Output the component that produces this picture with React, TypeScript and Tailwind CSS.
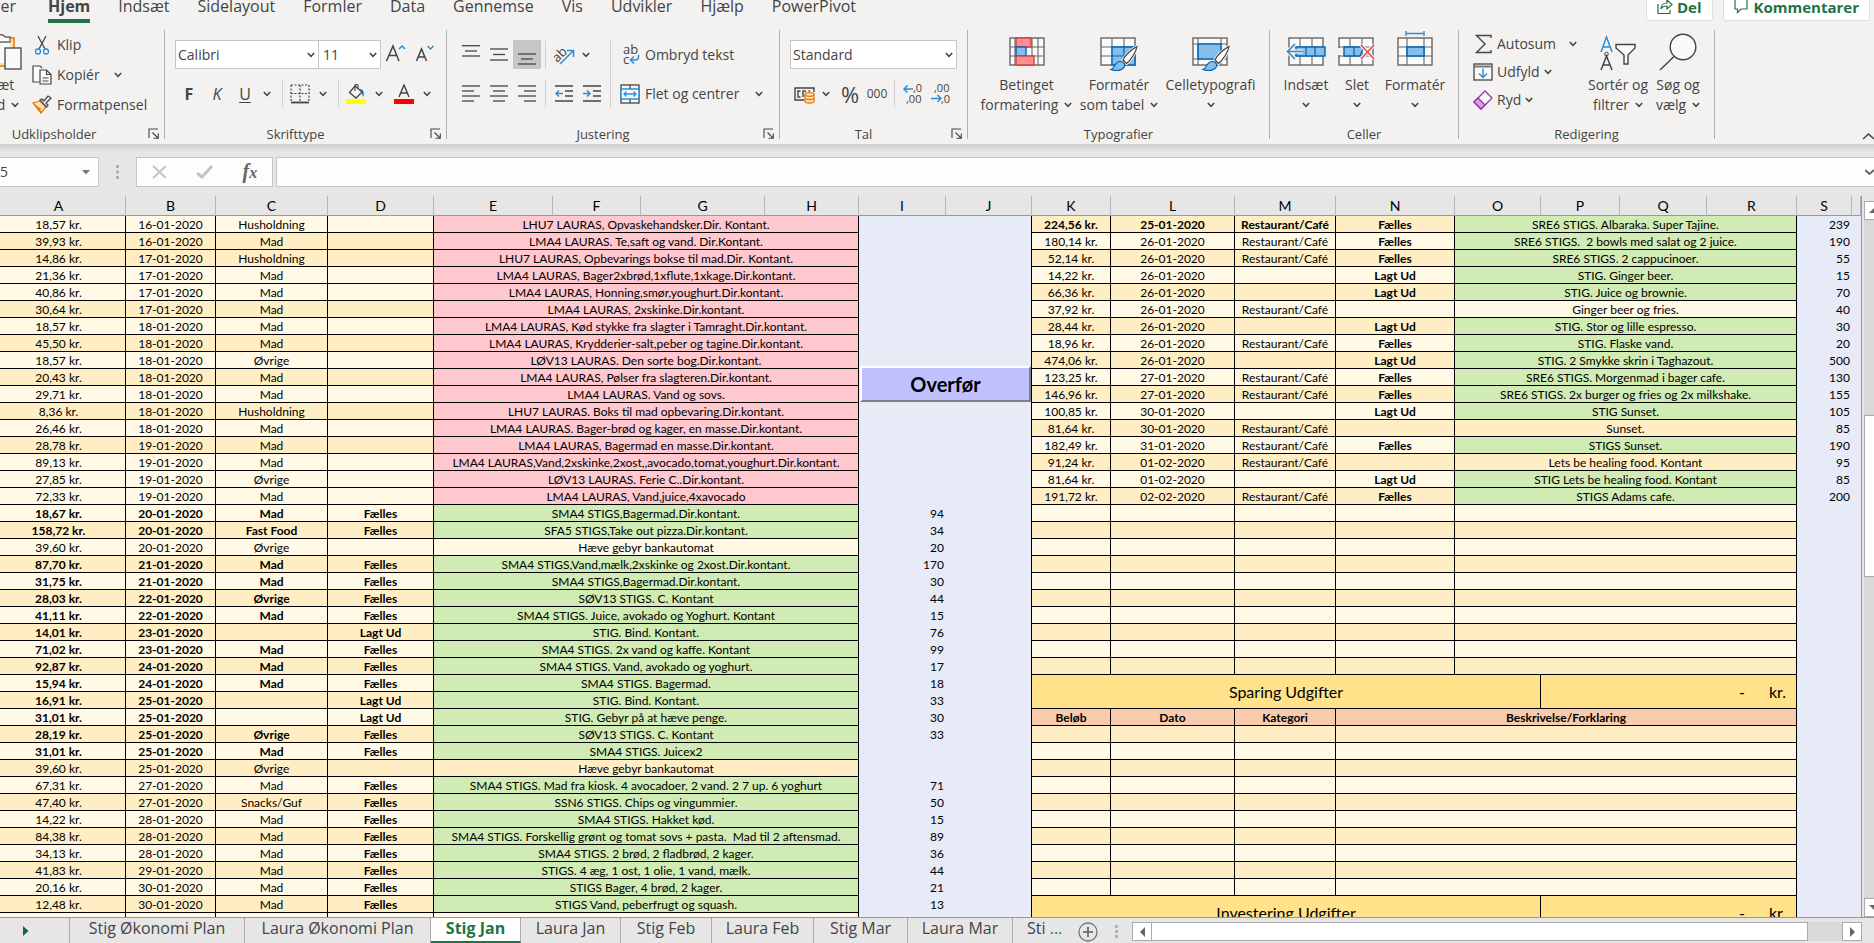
import React from "react";
import clsx from "clsx";

type Entry = {
  amount: string;
  date: string;
  category: string;
  share: string;
  text: string;
  dirham: string;
  bold?: boolean;
  shade?: "light" | "dark";
};

const entry = (
  amount: string,
  date: string,
  category: string,
  share: string,
  text: string,
  dirham: string,
  shade: "light" | "dark",
  bold = false
): Entry => ({ amount, date, category, share, text, dirham, shade, bold });

const leftRows: Entry[] = [
  entry("18,57 kr.", "16-01-2020", "Husholdning", "", "LHU7 LAURAS, Opvaskehandsker.Dir. Kontant.", "", "light"),
  entry("39,93 kr.", "16-01-2020", "Mad", "", "LMA4 LAURAS. Te,saft og vand. Dir.Kontant.", "", "dark"),
  entry("14,86 kr.", "17-01-2020", "Husholdning", "", "LHU7 LAURAS, Opbevarings bokse til mad.Dir. Kontant.", "", "dark"),
  entry("21,36 kr.", "17-01-2020", "Mad", "", "LMA4 LAURAS, Bager2xbrød,1xflute,1xkage.Dir.kontant.", "", "light"),
  entry("40,86 kr.", "17-01-2020", "Mad", "", "LMA4 LAURAS, Honning,smør,youghurt.Dir.kontant.", "", "light"),
  entry("30,64 kr.", "17-01-2020", "Mad", "", "LMA4 LAURAS, 2xskinke.Dir.kontant.", "", "dark"),
  entry("18,57 kr.", "18-01-2020", "Mad", "", "LMA4 LAURAS, Kød stykke fra slagter i Tamraght.Dir.kontant.", "", "light"),
  entry("45,50 kr.", "18-01-2020", "Mad", "", "LMA4 LAURAS, Krydderier-salt,peber og tagine.Dir.kontant.", "", "dark"),
  entry("18,57 kr.", "18-01-2020", "Øvrige", "", "LØV13 LAURAS. Den sorte bog.Dir.kontant.", "", "light"),
  entry("20,43 kr.", "18-01-2020", "Mad", "", "LMA4 LAURAS, Pølser fra slagteren.Dir.kontant.", "", "dark"),
  entry("29,71 kr.", "18-01-2020", "Mad", "", "LMA4 LAURAS. Vand og sovs.", "", "light"),
  entry("8,36 kr.", "18-01-2020", "Husholdning", "", "LHU7 LAURAS. Boks til mad opbevaring.Dir.kontant.", "", "dark"),
  entry("26,46 kr.", "18-01-2020", "Mad", "", "LMA4 LAURAS. Bager-brød og kager, en masse.Dir.kontant.", "", "light"),
  entry("28,78 kr.", "19-01-2020", "Mad", "", "LMA4 LAURAS, Bagermad en masse.Dir.kontant.", "", "dark"),
  entry("89,13 kr.", "19-01-2020", "Mad", "", "LMA4 LAURAS,Vand,2xskinke,2xost,,avocado,tomat,youghurt.Dir.kontant.", "", "light"),
  entry("27,85 kr.", "19-01-2020", "Øvrige", "", "LØV13 LAURAS. Ferie C..Dir.kontant.", "", "light"),
  entry("72,33 kr.", "19-01-2020", "Mad", "", "LMA4 LAURAS, Vand,juice,4xavocado", "", "light"),
  entry("18,67 kr.", "20-01-2020", "Mad", "Fælles", "SMA4 STIGS,Bagermad.Dir.kontant.", "94", "light", true),
  entry("158,72 kr.", "20-01-2020", "Fast Food", "Fælles", "SFA5 STIGS,Take out pizza.Dir.kontant.", "34", "dark", true),
  entry("39,60 kr.", "20-01-2020", "Øvrige", "", "Hæve gebyr bankautomat", "20", "light"),
  entry("87,70 kr.", "21-01-2020", "Mad", "Fælles", "SMA4 STIGS,Vand,mælk,2xskinke og 2xost.Dir.kontant.", "170", "dark", true),
  entry("31,75 kr.", "21-01-2020", "Mad", "Fælles", "SMA4 STIGS,Bagermad.Dir.kontant.", "30", "light", true),
  entry("28,03 kr.", "22-01-2020", "Øvrige", "Fælles", "SØV13 STIGS. C. Kontant", "44", "dark", true),
  entry("41,11 kr.", "22-01-2020", "Mad", "Fælles", "SMA4 STIGS. Juice, avokado og Yoghurt. Kontant", "15", "light", true),
  entry("14,01 kr.", "23-01-2020", "", "Lagt Ud", "STIG. Bind. Kontant.", "76", "dark", true),
  entry("71,02 kr.", "23-01-2020", "Mad", "Fælles", "SMA4 STIGS. 2x vand og kaffe. Kontant", "99", "light", true),
  entry("92,87 kr.", "24-01-2020", "Mad", "Fælles", "SMA4 STIGS. Vand, avokado og yoghurt.", "17", "dark", true),
  entry("15,94 kr.", "24-01-2020", "Mad", "Fælles", "SMA4 STIGS. Bagermad.", "18", "light", true),
  entry("16,91 kr.", "25-01-2020", "", "Lagt Ud", "STIG. Bind. Kontant.", "33", "dark", true),
  entry("31,01 kr.", "25-01-2020", "", "Lagt Ud", "STIG. Gebyr på at hæve penge.", "30", "light", true),
  entry("28,19 kr.", "25-01-2020", "Øvrige", "Fælles", "SØV13 STIGS. C. Kontant", "33", "dark", true),
  entry("31,01 kr.", "25-01-2020", "Mad", "Fælles", "SMA4 STIGS. Juicex2", "", "light", true),
  entry("39,60 kr.", "25-01-2020", "Øvrige", "", "Hæve gebyr bankautomat", "", "dark"),
  entry("67,31 kr.", "27-01-2020", "Mad", "Fælles", "SMA4 STIGS. Mad fra kiosk. 4 avocadoer, 2 vand. 2 7 up. 6 yoghurt", "71", "light"),
  entry("47,40 kr.", "27-01-2020", "Snacks/Guf", "Fælles", "SSN6 STIGS. Chips og vingummier.", "50", "dark"),
  entry("14,22 kr.", "28-01-2020", "Mad", "Fælles", "SMA4 STIGS. Hakket kød.", "15", "light"),
  entry("84,38 kr.", "28-01-2020", "Mad", "Fælles", "SMA4 STIGS. Forskellig grønt og tomat sovs + pasta.  Mad til 2 aftensmad.", "89", "dark"),
  entry("34,13 kr.", "28-01-2020", "Mad", "Fælles", "SMA4 STIGS. 2 brød, 2 fladbrød, 2 kager.", "36", "light"),
  entry("41,83 kr.", "29-01-2020", "Mad", "Fælles", "STIGS. 4 æg, 1 ost, 1 olie, 1 vand, mælk.", "44", "dark"),
  entry("20,16 kr.", "30-01-2020", "Mad", "Fælles", "STIGS Bager, 4 brød, 2 kager.", "21", "light"),
  entry("12,48 kr.", "30-01-2020", "Mad", "Fælles", "STIGS Vand, peberfrugt og squash.", "13", "dark"),
  entry("", "", "", "", "", "", "light"),
];

const cafe = "Restaurant/Café";

const rightRows: Entry[] = [
  { amount: "224,56 kr.", date: "25-01-2020", category: cafe, share: "Fælles", text: "SRE6 STIGS. Albaraka. Super Tajine.", dirham: "239", bold: true },
  { amount: "180,14 kr.", date: "26-01-2020", category: cafe, share: "Fælles", text: "SRE6 STIGS.  2 bowls med salat og 2 juice.", dirham: "190" },
  { amount: "52,14 kr.", date: "26-01-2020", category: cafe, share: "Fælles", text: "SRE6 STIGS. 2 cappucinoer.", dirham: "55" },
  { amount: "14,22 kr.", date: "26-01-2020", category: "", share: "Lagt Ud", text: "STIG. Ginger beer.", dirham: "15" },
  { amount: "66,36 kr.", date: "26-01-2020", category: "", share: "Lagt Ud", text: "STIG. Juice og brownie.", dirham: "70" },
  { amount: "37,92 kr.", date: "26-01-2020", category: cafe, share: "", text: "Ginger beer og fries.", dirham: "40" },
  { amount: "28,44 kr.", date: "26-01-2020", category: "", share: "Lagt Ud", text: "STIG. Stor og lille espresso.", dirham: "30" },
  { amount: "18,96 kr.", date: "26-01-2020", category: cafe, share: "Fælles", text: "STIG. Flaske vand.", dirham: "20" },
  { amount: "474,06 kr.", date: "26-01-2020", category: "", share: "Lagt Ud", text: "STIG. 2 Smykke skrin i Taghazout.", dirham: "500" },
  { amount: "123,25 kr.", date: "27-01-2020", category: cafe, share: "Fælles", text: "SRE6 STIGS. Morgenmad i bager cafe.", dirham: "130" },
  { amount: "146,96 kr.", date: "27-01-2020", category: cafe, share: "Fælles", text: "SRE6 STIGS. 2x burger og fries og 2x milkshake.", dirham: "155" },
  { amount: "100,85 kr.", date: "30-01-2020", category: "", share: "Lagt Ud", text: "STIG Sunset.", dirham: "105" },
  { amount: "81,64 kr.", date: "30-01-2020", category: cafe, share: "", text: "Sunset.", dirham: "85" },
  { amount: "182,49 kr.", date: "31-01-2020", category: cafe, share: "Fælles", text: "STIGS Sunset.", dirham: "190" },
  { amount: "91,24 kr.", date: "01-02-2020", category: cafe, share: "", text: "Lets be healing food. Kontant", dirham: "95" },
  { amount: "81,64 kr.", date: "01-02-2020", category: "", share: "Lagt Ud", text: "STIG Lets be healing food. Kontant", dirham: "85" },
  { amount: "191,72 kr.", date: "02-02-2020", category: cafe, share: "Fælles", text: "STIGS Adams cafe.", dirham: "200" },
];

const columns = [
  { name: "A", width: "w-[134px]" },
  { name: "B", width: "w-[90px]" },
  { name: "C", width: "w-[112px]" },
  { name: "D", width: "w-[106px]" },
  { name: "E", width: "w-[119px]" },
  { name: "F", width: "w-[88px]" },
  { name: "G", width: "w-[124px]" },
  { name: "H", width: "w-[94px]" },
  { name: "I", width: "w-[87px]" },
  { name: "J", width: "w-[86px]" },
  { name: "K", width: "w-[79px]" },
  { name: "L", width: "w-[124px]" },
  { name: "M", width: "w-[101px]" },
  { name: "N", width: "w-[119px]" },
  { name: "O", width: "w-[86px]" },
  { name: "P", width: "w-[79px]" },
  { name: "Q", width: "w-[87px]" },
  { name: "R", width: "w-[90px]" },
  { name: "S", width: "w-[55px]" },
  { name: "", width: "w-[9px]" },
];

const ribbonTabs = ["Hjem", "Indsæt", "Sidelayout", "Formler", "Data", "Gennemse", "Vis", "Udvikler", "Hjælp", "PowerPivot"];

const sheets = [
  { name: "Stig Økonomi Plan", width: "w-[175px]" },
  { name: "Laura Økonomi Plan", width: "w-[186px]" },
  { name: "Stig Jan", width: "w-[90px]" },
  { name: "Laura Jan", width: "w-[100px]" },
  { name: "Stig Feb", width: "w-[91px]" },
  { name: "Laura Feb", width: "w-[102px]" },
  { name: "Stig Mar", width: "w-[94px]" },
  { name: "Laura Mar", width: "w-[105px]" },
];

const cellBase = "border-r border-b border-black p-0 pt-[2px] h-[17px] leading-[14px] whitespace-pre";

/* ---------- Small building blocks ---------- */

const Chevron = () => (
  <svg width="8" height="6" viewBox="0 0 8 6" fill="none" stroke="#444" strokeWidth="1.5" className="shrink-0">
    <path d="M0.8 1 L4 4.3 L7.2 1" />
  </svg>
);

const ChevronButton = ({ label }: { label: string }) => (
  <button aria-label={label} className="w-4 h-7 flex items-center justify-center shrink-0">
    <Chevron />
  </button>
);

const IconButton = ({ label, active, children }: { label: string; active?: boolean; children: React.ReactNode }) => (
  <button
    aria-label={label}
    className={clsx("w-7 h-[29px] flex items-center justify-center shrink-0", active && "bg-[#c8c6c4]")}
  >
    {children}
  </button>
);

const Divider = () => <div className="w-px h-[27px] bg-[#d2d0ce] shrink-0" />;

const Lines = ({ rows }: { rows: [number, number, number][] }) => (
  <svg width="18" height="20" viewBox="0 0 18 20" stroke="#444" strokeWidth="1.3">
    {rows.map(([x1, x2, y]) => (
      <path key={y} d={`M${x1} ${y}H${x2}`} />
    ))}
  </svg>
);

const Group = ({
  title,
  width,
  launcher,
  children,
}: {
  title: string;
  width: string;
  launcher?: boolean;
  children: React.ReactNode;
}) => (
  <section className={clsx("flex flex-col shrink-0 border-r border-[#b3b0ad] h-[109px]", width)}>
    <div className="flex-1">{children}</div>
    <div className="flex items-center h-[18px] shrink-0 mb-[-4px]">
      <h2 className="flex-1 text-center text-[13px] leading-4">{title}</h2>
      {launcher && (
        <button aria-label={`${title} indstillinger`} className="w-5 flex justify-center">
          <svg width="12" height="12" viewBox="0 0 12 12" fill="none" stroke="#444" strokeWidth="1.1">
            <path d="M1 10V1H10M4.5 4.5L10 10M10.3 5.5V10.3H5.5" />
          </svg>
        </button>
      )}
    </div>
  </section>
);

const BigButton = ({
  icon,
  line1,
  line2,
  width,
}: {
  icon: React.ReactNode;
  line1: string;
  line2?: string;
  width: string;
}) => (
  <button className={clsx("flex flex-col items-center shrink-0 whitespace-nowrap", width)}>
    <span className="h-[45px] flex items-end pb-1">{icon}</span>
    <span className="leading-5">{line1}</span>
    <span className="flex items-center gap-[6px] h-5 leading-5">
      {line2}
      <Chevron />
    </span>
  </button>
);

const Brush = ({ x }: { x: number }) => (
  <g transform={`translate(${x} 8)`}>
    <path d="M27 1.5C22 4 15 10 13 15L16.5 18.5C21 15 26 7 27 1.5Z" fill="#fff" stroke="#f3f2f1" strokeWidth="3" />
    <path d="M27 1.5C22 4 15 10 13 15L16.5 18.5C21 15 26 7 27 1.5Z" fill="#fafafa" stroke="#444" strokeWidth="1.2" />
    <path d="M1 24.5C5 23.5 4.500 16.500 10 16.500C15 16.500 16 21 13 23.500C9.500 26 4.500 26 1 24.500Z" fill="#83beec" stroke="#0063b1" strokeWidth="1.2" />
  </g>
);

const Grid = ({ path }: { path: string }) => (
  <>
    <rect x="1" y="1" width="34" height="27" fill="#fafafa" stroke="#666" strokeWidth="1.4" />
    <path d={path} stroke="#666" strokeWidth="1.1" fill="none" />
  </>
);

/* ---------- Ribbon ---------- */

const ClipboardGroup = () => (
  <Group title="Udklipsholder" width="w-[201px]" launcher>
    <div className="flex pl-[18px]">
      <BigButton
        width="w-10"
        line1="Sæt"
        line2="ind"
        icon={
          <svg width="40" height="38" viewBox="0 0 40 38" fill="none">
            <path d="M3 5H32V33H3Z" fill="#fbe3b5" stroke="#e8912d" strokeWidth="2" />
            <path d="M6 9H28V30H6Z" fill="#fafafa" />
            <path d="M11 9V4H15C16 1 22 1 23 4H28V9Z" fill="#fafafa" stroke="#666" strokeWidth="1.3" />
            <rect x="23" y="15" width="16" height="21" fill="#fafafa" stroke="#444" strokeWidth="1.3" />
          </svg>
        }
      />
      <div className="flex flex-col pl-[10px]">
        <button className="flex items-center gap-[5px] h-[30px]">
          <svg width="20" height="20" viewBox="0 0 20 20" fill="none" strokeWidth="1.3">
            <path d="M6 1L13 14M14 1L7 14" stroke="#444" />
            <circle cx="6" cy="16.500" r="2.500" stroke="#2b8dd6" />
            <circle cx="14" cy="16.500" r="2.500" stroke="#2b8dd6" />
          </svg>
          Klip
        </button>
        <button className="flex items-center gap-[5px] h-[30px]">
          <svg width="20" height="20" viewBox="0 0 20 20" fill="#fafafa" stroke="#444" strokeWidth="1.2">
            <path d="M7 17H1V1H8L10 3" />
            <path d="M8 5H14.500L19 9.500V19H8Z" />
            <path d="M14.500 5V9.500H19M10.500 13H16.500M10.500 16H16.500" fill="none" />
          </svg>
          Kopiér
          <span className="pl-[9px]">
            <Chevron />
          </span>
        </button>
        <button className="flex items-center gap-[5px] h-[30px]">
          <svg width="20" height="20" viewBox="0 0 20 20" fill="none" strokeWidth="1.3">
            <path d="M1 8L8 6L14 12L9 18Z" fill="#fbe3b5" stroke="#e27a13" />
            <path d="M3 10L9 17M5 12L9 14" stroke="#e27a13" />
            <path d="M8 5L10 4L12 6L16 1L19 3L14 8L16 10L14.500 12Z" fill="#fafafa" stroke="#444" />
          </svg>
          Formatpensel
        </button>
      </div>
    </div>
  </Group>
);

const FontGroup = () => (
  <Group title="Skrifttype" width="w-[282px]" launcher>
    <div className="flex flex-col gap-[10px] pt-[10px] px-[10px]">
      <div className="flex items-center h-[29px]">
        <div className="relative">
          <select aria-label="Skrifttype" className="appearance-none w-36 h-[29px] bg-white border border-[#c8c6c4] pl-[2px]">
            <option>Calibri</option>
          </select>
          <span className="absolute right-1 top-3 pointer-events-none">
            <Chevron />
          </span>
        </div>
        <div className="relative">
          <select aria-label="Skriftstørrelse" className="appearance-none w-[62px] h-[29px] bg-white border border-l-0 border-[#c8c6c4] pl-1">
            <option>11</option>
          </select>
          <span className="absolute right-1 top-3 pointer-events-none">
            <Chevron />
          </span>
        </div>
        <button aria-label="Forøg skriftstørrelse" className="pl-1 pb-1">
          <svg width="22" height="20" viewBox="0 0 22 20" fill="none" strokeWidth="1.5">
            <path d="M1.500 18L8 3L14 18M4 12.500H12" stroke="#444" />
            <path d="M14 6L17 3L20 6" stroke="#2b8dd6" />
          </svg>
        </button>
        <button aria-label="Formindsk skriftstørrelse" className="pl-2 pb-1">
          <svg width="20" height="20" viewBox="0 0 20 20" fill="none" strokeWidth="1.5">
            <path d="M1.500 18L6.500 6L11.500 18M3.500 14H10" stroke="#444" />
            <path d="M12.500 3L15.500 6L18.500 3" stroke="#2b8dd6" />
          </svg>
        </button>
      </div>
      <div className="flex items-center h-[29px]">
        <IconButton label="Fed">
          <span className="font-bold text-base">F</span>
        </IconButton>
        <IconButton label="Kursiv">
          <span className="italic text-base">K</span>
        </IconButton>
        <IconButton label="Understreget">
          <span className="underline underline-offset-2 text-base">U</span>
        </IconButton>
        <ChevronButton label="Flere understregninger" />
        <div className="px-[7px]">
          <Divider />
        </div>
        <button aria-label="Rammer">
          <svg width="20" height="20" viewBox="0 0 20 20" fill="none" stroke="#444" strokeWidth="1.2">
            <path d="M1 1H19M1 1V17M19 1V17M10 1V17M1 9.500H19" strokeDasharray="2 1.500" />
            <path d="M1 18.500H19" strokeWidth="1.8" />
          </svg>
        </button>
        <span className="pl-[5px] flex">
          <ChevronButton label="Flere rammer" />
        </span>
        <div className="px-[7px]">
          <Divider />
        </div>
        <button aria-label="Fyldfarve">
          <svg width="20" height="20" viewBox="0 0 20 20" fill="none">
            <path d="M9 2L16 8L10 14L3.500 8.500Z" fill="#fafafa" stroke="#444" strokeWidth="1.3" />
            <path d="M9 7V1.500C9 0 12 0 12 2V5" stroke="#444" strokeWidth="1.1" />
            <path d="M14 5C17 5 18.500 8 17.500 13C16 11 16 8 14 5Z" fill="#0f6cbd" />
            <rect x="0" y="15" width="20" height="5" fill="#ffff00" />
          </svg>
        </button>
        <span className="pl-[5px] flex">
          <ChevronButton label="Flere fyldfarver" />
        </span>
        <button aria-label="Skriftfarve" className="pl-[7px]">
          <svg width="20" height="20" viewBox="0 0 20 20" fill="none">
            <path d="M5 13L10 1L15 13M6.800 9H13.200" stroke="#444" strokeWidth="1.4" />
            <rect x="0" y="15" width="20" height="5" fill="#ff0000" />
          </svg>
        </button>
        <span className="pl-[5px] flex">
          <ChevronButton label="Flere skriftfarver" />
        </span>
      </div>
    </div>
  </Group>
);

const AlignGroup = () => (
  <Group title="Justering" width="w-[333px]" launcher>
    <div className="flex pt-[10px] pl-[10px] pr-3">
      <div className="flex flex-col gap-[10px] w-[154px] border-r border-[#d2d0ce]">
        <div className="flex items-center h-[29px]">
          <IconButton label="Justér øverst">
            <Lines rows={[[0, 18, 0.7], [3, 15, 6], [0, 18, 11]]} />
          </IconButton>
          <IconButton label="Centreret lodret">
            <Lines rows={[[0, 18, 4], [3, 15, 9.5], [0, 18, 15]]} />
          </IconButton>
          <IconButton label="Justér nederst" active>
            <Lines rows={[[0, 18, 9], [3, 15, 14], [0, 18, 19]]} />
          </IconButton>
          <div className="px-1">
            <Divider />
          </div>
          <IconButton label="Retning">
            <svg width="22" height="22" viewBox="0 0 22 22" fill="none">
              <text x="0" y="15" fontSize="13" fill="#444" transform="rotate(-45 7 12)">ab</text>
              <path d="M7 20L20 7M14 6.500H20.500V13" stroke="#2b8dd6" strokeWidth="1.5" />
            </svg>
          </IconButton>
          <ChevronButton label="Flere retninger" />
        </div>
        <div className="flex items-center h-[29px]">
          <IconButton label="Venstrejustér">
            <Lines rows={[[0, 18, 2], [0, 12, 7], [0, 18, 12], [0, 12, 17]]} />
          </IconButton>
          <IconButton label="Centrér">
            <Lines rows={[[0, 18, 2], [3, 15, 7], [0, 18, 12], [3, 15, 17]]} />
          </IconButton>
          <IconButton label="Højrejustér">
            <Lines rows={[[0, 18, 2], [6, 18, 7], [0, 18, 12], [6, 18, 17]]} />
          </IconButton>
          <div className="px-1">
            <Divider />
          </div>
          <IconButton label="Formindsk indrykning">
            <svg width="18" height="20" viewBox="0 0 18 20" fill="none" strokeWidth="1.3">
              <path d="M0 2H18M10 7H18M10 12H18M0 17H18" stroke="#444" />
              <path d="M8 9.500H1M4 6.500L1 9.500L4 12.500" stroke="#2b8dd6" strokeWidth="1.5" />
            </svg>
          </IconButton>
          <IconButton label="Forøg indrykning">
            <svg width="18" height="20" viewBox="0 0 18 20" fill="none" strokeWidth="1.3">
              <path d="M0 2H18M10 7H18M10 12H18M0 17H18" stroke="#444" />
              <path d="M0 9.500H7M4 6.500L7 9.500L4 12.500" stroke="#2b8dd6" strokeWidth="1.5" />
            </svg>
          </IconButton>
        </div>
      </div>
      <div className="flex flex-col gap-[10px] flex-1 pl-[9px]">
        <button className="flex items-center gap-[5px] h-[29px]">
          <svg width="20" height="22" viewBox="0 0 20 22" fill="none" className="shrink-0">
            <text fontSize="13" fill="#444">
              <tspan x="3" y="10">ab</tspan>
              <tspan x="3" y="20">c</tspan>
            </text>
            <path d="M18.500 11V13C18.500 15 17 16 15 16H11M14 12.500L10.500 16L14 19.500" stroke="#2b8dd6" strokeWidth="1.5" />
          </svg>
          Ombryd tekst
        </button>
        <button className="flex items-center gap-[5px] h-[29px]">
          <svg width="20" height="20" viewBox="0 0 20 20" fill="none" strokeWidth="1.3">
            <rect x="1" y="1" width="18" height="18" fill="#fafafa" stroke="#444" />
            <path d="M10 1V19" stroke="#444" />
            <rect x="1" y="5" width="18" height="10" fill="#fafafa" stroke="#2b8dd6" strokeWidth="1.500" />
            <path d="M4 10H16M6.500 7.500L4 10L6.500 12.500M13.500 7.500L16 10L13.500 12.500" stroke="#2b8dd6" />
          </svg>
          <span className="flex-1 text-left">Flet og centrer</span>
          <span className="pr-1">
            <Chevron />
          </span>
        </button>
      </div>
    </div>
  </Group>
);

const NumberGroup = () => (
  <Group title="Tal" width="w-[188px]" launcher>
    <div className="flex flex-col gap-[10px] pt-[10px] px-[10px]">
      <div className="relative">
        <select aria-label="Talformat" className="appearance-none w-full h-[29px] bg-white border border-[#c8c6c4] pl-[2px]">
          <option>Standard</option>
        </select>
        <span className="absolute right-1 top-3 pointer-events-none">
          <Chevron />
        </span>
      </div>
      <div className="flex items-center h-[29px] pl-1">
        <button aria-label="Regnskabsformat">
          <svg width="21" height="20" viewBox="0 0 21 20" fill="none">
            <path d="M10 16H1V4H20V8" stroke="#444" strokeWidth="1.400" />
            <path d="M6.500 7H4V13H6.500M12 7H9V13M16 7H14.500" stroke="#444" strokeWidth="1.400" />
            <path d="M11 10V17.500C11 19.500 20 19.500 20 17.500V10" fill="#fbe3b5" stroke="#e27a13" strokeWidth="1.300" />
            <ellipse cx="15.500" cy="10.500" rx="4.500" ry="1.800" fill="#fbe3b5" stroke="#e27a13" strokeWidth="1.300" />
            <path d="M11 14C11 16 20 16 20 14" stroke="#e27a13" strokeWidth="1.300" />
          </svg>
        </button>
        <span className="px-[3px] flex">
          <ChevronButton label="Flere regnskabsformater" />
        </span>
        <button aria-label="Procent" className="w-[26px] text-[22px] leading-6">%</button>
        <button aria-label="Tusindtalsseparator" className="w-7 text-xs">000</button>
        <div className="pl-[3px]">
          <Divider />
        </div>
        <button aria-label="Flere decimaler" className="pl-2">
          <svg width="20" height="22" viewBox="0 0 20 22" fill="none">
            <text fontSize="11" fill="#444">
              <tspan x="10" y="9">,0</tspan>
              <tspan x="3" y="20">,00</tspan>
            </text>
            <path d="M10 6H1M4.500 2.500L1 6L4.500 9.500" stroke="#2b8dd6" strokeWidth="1.500" />
          </svg>
        </button>
        <button aria-label="Færre decimaler" className="pl-2">
          <svg width="20" height="22" viewBox="0 0 20 22" fill="none">
            <text fontSize="11" fill="#444">
              <tspan x="3" y="9">,00</tspan>
              <tspan x="10" y="20">,0</tspan>
            </text>
            <path d="M0 15.500H10M6.500 12L10 15.500L6.500 19" stroke="#2b8dd6" strokeWidth="1.500" />
          </svg>
        </button>
      </div>
    </div>
  </Group>
);

const StylesGroup = () => (
  <Group title="Typografier" width="w-[302px]">
    <div className="flex pl-2">
      <BigButton
        width="w-[101px]"
        line1="Betinget"
        line2="formatering"
        icon={
          <svg width="36" height="34" viewBox="0 0 36 34">
            <Grid path="M6 1V28M12 1V28M23 1V28M29 1V28M1 10H35M1 19H35" />
            <rect x="7" y="1" width="15" height="9" fill="#ff8f94" stroke="#d83b3b" strokeWidth="1.400" />
            <rect x="7" y="10" width="10" height="9" fill="#83beec" stroke="#0063b1" strokeWidth="1.400" />
            <rect x="7" y="19" width="18" height="9" fill="#ff8f94" stroke="#d83b3b" strokeWidth="1.400" />
          </svg>
        }
      />
      <BigButton
        width="w-[84px]"
        line1="Formatér"
        line2="som tabel"
        icon={
          <svg width="38" height="34" viewBox="0 0 38 34">
            <Grid path="M12 1V28M24 1V28M1 10H35M1 19H35" />
            <path d="M12 10H35V28H12Z" fill="#83beec" stroke="#0063b1" strokeWidth="1.300" />
            <path d="M24 10V28M12 19H35" stroke="#0063b1" strokeWidth="1.200" />
            <Brush x={10} />
          </svg>
        }
      />
      <BigButton
        width="w-[99px]"
        line1="Celletypografi"
        icon={
          <svg width="38" height="34" viewBox="0 0 38 34">
            <Grid path="M6 1V28M29 1V28M1 7H35M1 22H35" />
            <rect x="6" y="7" width="23" height="15" fill="#83beec" stroke="#0063b1" strokeWidth="1.400" />
            <Brush x={10} />
          </svg>
        }
      />
    </div>
  </Group>
);

const CellsGroup = () => (
  <Group title="Celler" width="w-[189px]">
    <div className="flex pl-[9px]">
      <BigButton
        width="w-[54px]"
        line1="Indsæt"
        icon={
          <svg width="40" height="34" viewBox="-2 0 40 34" fill="none">
            <Grid path="M12 1V28M24 1V28M1 10H35M1 19H35" />
            <rect x="8" y="10" width="29" height="9" fill="#83beec" stroke="#0063b1" strokeWidth="1.400" />
            <path d="M18 10V19M27 10V19" stroke="#0063b1" strokeWidth="1.200" />
            <path d="M15 14.500H0M7 7L-0.500 14.500L7 22" stroke="#f3f2f1" strokeWidth="4" />
            <path d="M15 14.500H0M7 7L-0.500 14.500L7 22" stroke="#2b8dd6" strokeWidth="1.600" />
          </svg>
        }
      />
      <BigButton
        width="w-[48px]"
        line1="Slet"
        icon={
          <svg width="38" height="34" viewBox="0 0 38 34" fill="none">
            <Grid path="M12 1V28M24 1V28M1 10H35M1 19H35" />
            <path d="M0 11H6V18H0Z" fill="#f3f2f1" />
            <path d="M6 10H26L22 19H6Z" fill="#83beec" stroke="#0063b1" strokeWidth="1.400" />
            <path d="M16 10V19" stroke="#0063b1" strokeWidth="1.200" />
            <path d="M23 8L36 22M36 8L23 22" stroke="#f3f2f1" strokeWidth="4" />
            <path d="M23 8L36 22M36 8L23 22" stroke="#e8464a" strokeWidth="1.500" />
          </svg>
        }
      />
      <BigButton
        width="w-[68px]"
        line1="Formatér"
        icon={
          <svg width="36" height="41" viewBox="0 -7 36 41" fill="none">
            <Grid path="M10 1V28M27 1V28M1 10H35M1 19H35" />
            <rect x="10" y="10" width="17" height="9" fill="#83beec" stroke="#0063b1" strokeWidth="1.500" />
            <path d="M9 -3.500H27M9 -6V-1M27 -6V-1" stroke="#2b8dd6" strokeWidth="1.400" />
          </svg>
        }
      />
    </div>
  </Group>
);

const EditGroup = () => (
  <Group title="Redigering" width="w-[256px]">
    <div className="flex pl-[14px]">
      <div className="flex flex-col w-[104px] mr-1">
        <button className="flex items-center gap-1 h-7">
          <svg width="20" height="20" viewBox="0 0 20 20" fill="none" stroke="#444" strokeWidth="1.400">
            <path d="M18 4V1.500H3.500L12 10L3.500 18.500H18V16" />
          </svg>
          <span className="flex-1 text-left">Autosum</span>
          <Chevron />
        </button>
        <button className="flex items-center gap-1 h-7">
          <svg width="20" height="20" viewBox="0 0 20 20" fill="none">
            <rect x="1" y="2" width="18" height="16" fill="#fafafa" stroke="#444" strokeWidth="1.300" />
            <path d="M1 4.500H19" stroke="#777" strokeWidth="2" />
            <path d="M10 6.500V15.500M6 11.500L10 15.500L14 11.500" stroke="#2b8dd6" strokeWidth="1.400" />
          </svg>
          Udfyld
          <Chevron />
        </button>
        <button className="flex items-center gap-1 h-7">
          <svg width="20" height="20" viewBox="0 0 20 20" fill="none" stroke="#9b2fae" strokeWidth="1.300">
            <path d="M1 12L12 1L19 8L8 19Z" fill="#fafafa" />
            <path d="M1 12L5 8L12 15L8 19Z" fill="#d8a0df" />
          </svg>
          Ryd
          <Chevron />
        </button>
      </div>
      <BigButton
        width="w-[74px]"
        line1="Sortér og"
        line2="filtrer"
        icon={
          <svg width="38" height="36" viewBox="0 0 38 36" fill="none">
            <path d="M2 17L7.500 2L13 17M4 12H11" stroke="#2b8dd6" strokeWidth="1.500" />
            <path d="M2 35L7.500 21L13 35M4 30H11" stroke="#444" strokeWidth="1.500" />
            <circle cx="7.500" cy="19" r="1.800" stroke="#444" strokeWidth="1" />
            <path d="M17 9.500H36V13L29 20V29H25V20L17 13Z" fill="#fafafa" stroke="#444" strokeWidth="1.400" />
          </svg>
        }
      />
      <BigButton
        width="w-[46px]"
        line1="Søg og"
        line2="vælg"
        icon={
          <svg width="38" height="38" viewBox="0 0 38 38" fill="none" stroke="#444" strokeWidth="1.400">
            <circle cx="24" cy="14" r="12.800" fill="#fafafa" />
            <path d="M15 23.500L1 37" />
          </svg>
        }
      />
    </div>
  </Group>
);

/* ---------- Sheet ---------- */

const descriptionColor = (row: Entry, plain: string) => {
  if (row.text.includes("LAURAS")) return "bg-[#ffc7ce]";
  if (row.text.startsWith("S") && row.text.includes("STIG")) return "bg-[#d1ebb4]";
  return plain;
};

const EntryCells = ({ row, shade }: { row: Entry; shade: string }) => {
  const weight = row.bold && "font-bold";
  return (
    <>
      <td className={clsx(cellBase, shade, weight)}>{row.amount}</td>
      <td className={clsx(cellBase, shade, weight)}>{row.date}</td>
      <td className={clsx(cellBase, shade, weight)}>{row.category}</td>
      <td className={clsx(cellBase, shade, "font-bold")}>{row.share}</td>
      <td colSpan={4} className={clsx(cellBase, descriptionColor(row, shade))}>
        {row.text}
      </td>
    </>
  );
};

const emptyEntry: Entry = { amount: "", date: "", category: "", share: "", text: "", dirham: "" };

const SectionTitle = ({ title }: { title: string }) => (
  <>
    <td colSpan={5} rowSpan={2} className="border-r border-b border-black bg-[#ffe28a] p-0 text-base leading-5">
      {title}
    </td>
    <td colSpan={3} rowSpan={2} className="border-r border-b border-black bg-[#ffe28a] p-0 text-base leading-5">
      <span className="flex justify-end gap-6 pr-[10px]">
        <span>-</span>
        <span>kr.</span>
      </span>
    </td>
  </>
);

const RightCells = ({ index }: { index: number }) => {
  const shade = index % 2 === 0 ? "bg-[#ffeec4]" : "bg-[#fff9e6]";
  if (index < 27) return <EntryCells row={rightRows[index] ?? emptyEntry} shade={shade} />;
  if (index === 27) return <SectionTitle title="Sparing Udgifter" />;
  if (index === 40) return <SectionTitle title="Investering Udgifter" />;
  if (index === 28 || index === 41) return null;

  const head = index === 29;
  const color = head ? "bg-[#f8cbad] font-bold" : shade;
  return (
    <>
      <td className={clsx(cellBase, color)}>{head && "Beløb"}</td>
      <td className={clsx(cellBase, color)}>{head && "Dato"}</td>
      <td className={clsx(cellBase, color)}>{head && "Kategori"}</td>
      <td colSpan={5} className={clsx(cellBase, color)}>{head && "Beskrivelse/Forklaring"}</td>
    </>
  );
};

const Sheet = () => (
  <div className="relative flex-1 overflow-hidden">
    <table className="table-fixed border-separate border-spacing-0 w-[1869px] -ml-2 text-center text-xs text-black bg-[#e7ebf7] border-r border-[#999] font-['Lato','Noto_Sans',sans-serif]">
      <colgroup>
        {columns.map((column) => (
          <col key={column.name} className={column.width} />
        ))}
      </colgroup>
      <thead>
        <tr className="bg-[#e6e6e6]">
          {columns.map((column) => (
            <th
              key={column.name}
              className="h-5 p-0 pt-px border-b border-r border-b-[#999] border-r-[#b5b5b5] text-sm leading-4 font-normal"
            >
              {column.name}
            </th>
          ))}
        </tr>
      </thead>
      <tbody>
        {leftRows.map((row, index) => (
          <tr key={index} className="h-[17px]">
            <EntryCells row={row} shade={row.shade === "dark" ? "bg-[#ffeec4]" : "bg-[#fff9e6]"} />
            <td className="p-0 pt-px pr-[2px] text-right leading-[14px]">{row.dirham}</td>
            <td className="p-0 border-r border-black" />
            <RightCells index={index} />
            <td className="p-0 pt-px pr-[2px] text-right leading-[14px]">{rightRows[index]?.dirham}</td>
            <td className="p-0" />
          </tr>
        ))}
      </tbody>
    </table>
    {/* Macro button floating over columns I and J */}
    <button className="absolute left-[860px] top-[170px] w-[171px] h-9 bg-[#c0c0ff] border-2 border-t-white border-l-white border-r-[#808080] border-b-[#808080] text-xl leading-6 font-bold text-black font-['Lato','Noto_Sans',sans-serif]">
      Overfør
    </button>
  </div>
);

const VerticalScroll = () => (
  <div className="w-[10px] shrink-0 flex flex-col pt-[5px] overflow-hidden">
    <button aria-label="Rul op" className="h-[19px] w-5 bg-white border border-[#ababab] flex items-center justify-center shrink-0">
      <svg width="10" height="5" viewBox="0 0 10 5" fill="#666"><path d="M0 5L5 0L10 5Z" /></svg>
    </button>
    <div className="flex-1 w-5 bg-[#d9d9d9] pt-[195px]">
      <div className="h-[162px] bg-white border border-[#ababab]" />
    </div>
    <button aria-label="Rul ned" className="h-[19px] w-5 bg-white border border-[#ababab] flex items-center justify-center shrink-0">
      <svg width="10" height="5" viewBox="0 0 10 5" fill="#666"><path d="M0 0L5 5L10 0Z" /></svg>
    </button>
  </div>
);

const App = () => {
  return (
    <div className="h-screen flex flex-col overflow-hidden bg-[#e6e6e6] text-[#444] text-sm font-['Open_Sans','Noto_Sans',sans-serif]">
      {/* Ribbon tabs */}
      <header className="flex items-start justify-between bg-[#f3f2f1] h-[27px] shrink-0">
        <nav className="flex gap-7 -mt-1 text-base leading-5">
          <a href="#filer" className="w-5 flex justify-end pr-1">Filer</a>
          {ribbonTabs.map((tab) => (
            <a
              key={tab}
              href={`#${tab.toLowerCase()}`}
              className={clsx("h-[27px]", tab === "Hjem" && "font-bold border-b-4 border-[#217346]")}
            >
              {tab}
            </a>
          ))}
        </nav>
        <div className="flex gap-[10px] pr-1 text-[15px] leading-5 font-bold text-[#217346]">
          <button className="flex items-start gap-1 -mt-1 h-[25px] px-[10px] bg-white border border-[#e1dfdd] rounded-[3px]">
            <svg width="16" height="18" viewBox="0 0 16 18" fill="none" stroke="#217346" strokeWidth="1.200">
              <path d="M1 7V16.500H13V13M4 12C4 8 7 6 10 6V3L15 7.500L10 12V9C7 9 5 10 4 12Z" />
            </svg>
            Del
          </button>
          <button className="flex items-start gap-[6px] -mt-1 h-[25px] px-[10px] bg-white border border-[#e1dfdd] rounded-[3px]">
            <svg width="14" height="18" viewBox="0 0 14 18" fill="none" stroke="#217346" strokeWidth="1.200">
              <path d="M1 2H13V12H7L3.500 15.500V12H1Z" />
            </svg>
            Kommentarer
          </button>
        </div>
      </header>

      {/* Ribbon */}
      <div className="flex bg-[#f3f2f1] h-[117px] pt-[3px] shrink-0">
        <div className="flex flex-1 -ml-9">
          <ClipboardGroup />
          <FontGroup />
          <AlignGroup />
          <NumberGroup />
          <StylesGroup />
          <CellsGroup />
          <EditGroup />
        </div>
        <button aria-label="Skjul båndet" className="self-end pb-1 w-3 overflow-hidden">
          <svg width="12" height="8" viewBox="0 0 12 8" fill="none" stroke="#444" strokeWidth="1.500">
            <path d="M1 7L6.500 2L12 7" />
          </svg>
        </button>
      </div>
      <div className="h-[13px] shrink-0 bg-linear-to-b from-[#cfcfcf] to-[#e6e6e6] to-60%" />

      {/* Formula bar */}
      <div className="flex items-center h-[30px] shrink-0">
        <div className="w-[99px] h-full flex items-center justify-between bg-[#fdfdfd] border border-l-0 border-[#c6c6c6] pr-2">
          <input aria-label="Navneboks" defaultValue="5" className="w-10 bg-transparent" />
          <svg width="8" height="5" viewBox="0 0 8 5" fill="#777"><path d="M0 0H8L4 4.500Z" /></svg>
        </div>
        <svg width="37" height="14" viewBox="0 0 37 14" fill="#b0b0b0">
          <path d="M17 0h3v3h-3zM17 5.500h3v3h-3zM17 11h3v3h-3z" />
        </svg>
        <div className="w-[137px] h-full flex items-center justify-around bg-[#fdfdfd] border border-[#c6c6c6]">
          <button aria-label="Annuller">
            <svg width="15" height="14" viewBox="0 0 15 14" stroke="#c4c4c4" strokeWidth="2"><path d="M1 1L14 13M14 1L1 13" /></svg>
          </button>
          <button aria-label="Angiv">
            <svg width="17" height="14" viewBox="0 0 17 14" fill="none" stroke="#c4c4c4" strokeWidth="3"><path d="M1 8L6 12L16 1" /></svg>
          </button>
          <button aria-label="Indsæt funktion" className="italic font-bold text-xl leading-6 text-[#666] font-['Liberation_Serif',serif]">
            f<span className="text-base">x</span>
          </button>
        </div>
        <div className="flex-1 h-full flex items-center ml-[3px] bg-[#fdfdfd] border border-r-0 border-[#c6c6c6]">
          <input aria-label="Formellinje" className="flex-1 h-full bg-transparent" />
          <svg width="9" height="6" viewBox="0 0 9 6" fill="none" stroke="#666" strokeWidth="2"><path d="M0 1L4.500 5L9 1" /></svg>
        </div>
      </div>

      {/* Grid and scroll bar */}
      <div className="flex flex-1 min-h-0 pt-[9px]">
        <Sheet />
        <VerticalScroll />
      </div>

      {/* Sheet tabs */}
      <footer className="flex items-start h-[26px] shrink-0 border-t border-[#999] text-base leading-5">
        <div className="w-[70px] h-full flex items-center pl-[23px] border-r border-[#ababab] shrink-0">
          <svg width="6" height="10" viewBox="0 0 6 10" fill="#0e6b37"><path d="M0 0L5.500 5L0 10Z" /></svg>
        </div>
        {sheets.map((sheet) => (
          <a
            key={sheet.name}
            href={`#${sheet.name.replaceAll(" ", "-").toLowerCase()}`}
            className={clsx(
              "h-full text-center border-r border-[#ababab] whitespace-nowrap shrink-0",
              sheet.width,
              sheet.name === "Stig Jan" && "bg-white font-bold text-[#217346] border-b-2 border-b-[#217346]"
            )}
          >
            {sheet.name}
          </a>
        ))}
        <a href="#sti" className="pl-[14px] w-[65px] shrink-0 whitespace-nowrap">
          Sti <span className="text-[#217346]">...</span>
        </a>
        <button aria-label="Nyt ark" className="pt-1 shrink-0">
          <svg width="20" height="20" viewBox="0 0 20 20" fill="none" stroke="#777" strokeWidth="1.300">
            <circle cx="10" cy="10" r="9" />
            <path d="M10 5V15M5 10H15" strokeWidth="2" />
          </svg>
        </button>
        <svg width="34" height="26" viewBox="0 0 34 26" fill="#b0b0b0" className="shrink-0">
          <path d="M17 7h3v3h-3zM17 12h3v3h-3zM17 17h3v3h-3z" />
        </svg>
        <div className="flex flex-1 mt-1 mr-3 h-[19px]">
          <button aria-label="Rul til venstre" className="w-5 bg-white border border-[#ababab] flex items-center justify-center">
            <svg width="5" height="10" viewBox="0 0 5 10" fill="#666"><path d="M5 0V10L0 5Z" /></svg>
          </button>
          <div className="flex-1 pr-[34px] bg-[#d9d9d9]">
            <div className="h-full bg-white border border-l-0 border-[#ababab]" />
          </div>
          <button aria-label="Rul til højre" className="w-5 bg-white border border-[#ababab] flex items-center justify-center">
            <svg width="5" height="10" viewBox="0 0 5 10" fill="#666"><path d="M0 0V10L5 5Z" /></svg>
          </button>
        </div>
      </footer>
    </div>
  );
};

export default App;
